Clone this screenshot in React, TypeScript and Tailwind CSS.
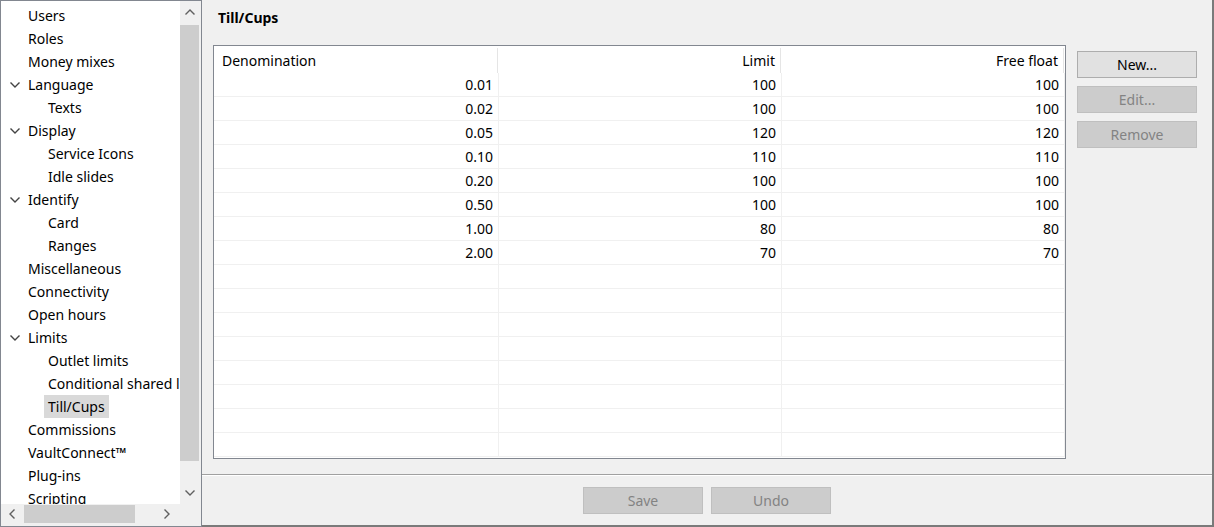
import React from "react";

type TreeItem = { label: string; level: 0 | 1; expanded?: boolean; selected?: boolean };

const tree: TreeItem[] = [
  { label: "Users", level: 0 },
  { label: "Roles", level: 0 },
  { label: "Money mixes", level: 0 },
  { label: "Language", level: 0, expanded: true },
  { label: "Texts", level: 1 },
  { label: "Display", level: 0, expanded: true },
  { label: "Service Icons", level: 1 },
  { label: "Idle slides", level: 1 },
  { label: "Identify", level: 0, expanded: true },
  { label: "Card", level: 1 },
  { label: "Ranges", level: 1 },
  { label: "Miscellaneous", level: 0 },
  { label: "Connectivity", level: 0 },
  { label: "Open hours", level: 0 },
  { label: "Limits", level: 0, expanded: true },
  { label: "Outlet limits", level: 1 },
  { label: "Conditional shared limits", level: 1 },
  { label: "Till/Cups", level: 1, selected: true },
  { label: "Commissions", level: 0 },
  { label: "VaultConnect™", level: 0 },
  { label: "Plug-ins", level: 0 },
  { label: "Scripting", level: 0 },
];

const rows: [string, string, string][] = [
  ["0.01", "100", "100"],
  ["0.02", "100", "100"],
  ["0.05", "120", "120"],
  ["0.10", "110", "110"],
  ["0.20", "100", "100"],
  ["0.50", "100", "100"],
  ["1.00", "80", "80"],
  ["2.00", "70", "70"],
];

function Chevron({ dir, color = "#404040" }: { dir: "down" | "up" | "left" | "right"; color?: string }) {
  const paths: Record<string, string> = {
    down: "M1 3 L5 7 L9 3",
    up: "M1 6 L5 2 L9 6",
    left: "M6 1 L2 5 L6 9",
    right: "M3 1 L7 5 L3 9",
  };
  return (
    <svg width="10" height="10" viewBox="0 0 10 10" className="block">
      <path d={paths[dir]} fill="none" stroke={color} strokeWidth="1.4" strokeLinecap="square" />
    </svg>
  );
}

export default function App() {
  const emptyRows = Array.from({ length: 8 });
  return (
    <div className="w-[1214px] h-[527px] flex bg-[#f0f0f0] text-[14px] text-black font-['Noto_Sans',sans-serif] overflow-hidden">
      {/* Left tree panel */}
      <div className="w-[202px] h-[527px] shrink-0 border border-[#828790] bg-[#f0f0f0] flex flex-col pb-[2px]">
        <div className="flex flex-1 min-h-0">
          <div className="w-[179px] bg-white overflow-hidden pt-[3px]">
            {tree.map((t) => (
              <div key={t.label} className="h-[23px] flex items-center whitespace-nowrap">
                <div className="w-[27px] shrink-0 flex justify-start pl-[9px]">
                  {t.level === 0 && t.expanded ? <Chevron dir="down" color="#444" /> : null}
                </div>
                {t.level === 1 ? <div className="w-[20px] shrink-0" /> : null}
                <span
                  className={
                    t.selected
                      ? "bg-[#d9d9d9] -ml-[4px] px-[4px] h-[23px] leading-[23px]"
                      : "leading-[23px]"
                  }
                >
                  {t.label}
                </span>
              </div>
            ))}
          </div>
          {/* vertical scrollbar */}
          <div className="w-[21px] bg-[#f0f0f0] flex flex-col pr-[2px]">
            <div className="h-[24px] flex items-center justify-center">
              <Chevron dir="up" color="#606060" />
            </div>
            <div className="h-[436px] bg-[#cdcdcd]" />
            <div className="flex-1 flex items-end justify-center pb-[6px]">
              <Chevron dir="down" color="#606060" />
            </div>
          </div>
        </div>
        {/* horizontal scrollbar */}
        <div className="h-[20px] flex">
          <div className="w-[179px] flex items-center bg-[#f0f0f0]">
            <div className="w-[23px] flex justify-center">
              <Chevron dir="left" color="#606060" />
            </div>
            <div className="w-[111px] h-[18px] bg-[#cdcdcd]" />
            <div className="flex-1 flex justify-end pr-[8px]">
              <Chevron dir="right" color="#606060" />
            </div>
          </div>
          <div className="flex-1 bg-[#f0f0f0]" />
        </div>
      </div>

      {/* Right area */}
      <div className="flex-1 h-[527px] flex flex-col border-r-2 border-b-2 border-[#7a7a7a]">
        <div className="pl-[16px] pt-[8px] h-[28px] font-bold leading-[20px]">Till/Cups</div>
        <div className="flex pl-[11px] mt-[17px] gap-[11px]">
          {/* table */}
          <div className="w-[853px] h-[414px] border border-[#828790] bg-white overflow-hidden">
            <div className="grid grid-cols-[285px_283px_1fr] h-[27px]">
              <div className="flex items-center pl-[8px] pt-[1px]">
                <span className="flex-1">Denomination</span>
                <span className="w-px h-[25px] bg-[#e5e5e5] mr-[1px]" />
              </div>
              <div className="flex items-center justify-end pt-[1px]">
                <span className="pr-[5px]">Limit</span>
                <span className="w-px h-[25px] bg-[#e5e5e5] mr-[1px]" />
              </div>
              <div className="flex items-center justify-end pt-[1px]">
                <span className="pr-[5px]">Free float</span>
                <span className="w-px h-[25px] bg-[#e5e5e5] mr-[1px]" />
              </div>
            </div>
            {rows.map((r, i) => (
              <div key={i} className="grid grid-cols-[285px_283px_1fr] h-[24px] border-b border-[#f0f0f0]">
                {r.map((c, j) => (
                  <div key={j} className="border-r border-[#f0f0f0] text-right pr-[5px] leading-[23px]">
                    {c}
                  </div>
                ))}
              </div>
            ))}
            {emptyRows.map((_, i) => (
              <div key={i} className="grid grid-cols-[285px_283px_1fr] h-[24px] border-b border-[#f0f0f0]">
                <div className="border-r border-[#f0f0f0]" />
                <div className="border-r border-[#f0f0f0]" />
                <div className="border-r border-[#f0f0f0]" />
              </div>
            ))}
          </div>
          {/* side buttons */}
          <div className="flex flex-col gap-[8px] pt-[6px]">
            <button className="w-[120px] h-[27px] bg-[#e1e1e1] border border-[#adadad] text-black">New...</button>
            <button className="w-[120px] h-[27px] bg-[#cccccc] border border-[#bfbfbf] text-[#838383]">Edit...</button>
            <button className="w-[120px] h-[27px] bg-[#cccccc] border border-[#bfbfbf] text-[#838383]">Remove</button>
          </div>
        </div>
        <div className="mt-[15px] h-px bg-[#a0a0a0]" />
        <div className="h-px bg-white" />
        <div className="flex-1 flex justify-center items-start pt-[11px] gap-[8px]">
          <button className="w-[120px] h-[27px] bg-[#cccccc] border border-[#bfbfbf] text-[#838383]">Save</button>
          <button className="w-[120px] h-[27px] bg-[#cccccc] border border-[#bfbfbf] text-[#838383]">Undo</button>
        </div>
      </div>
    </div>
  );
}
